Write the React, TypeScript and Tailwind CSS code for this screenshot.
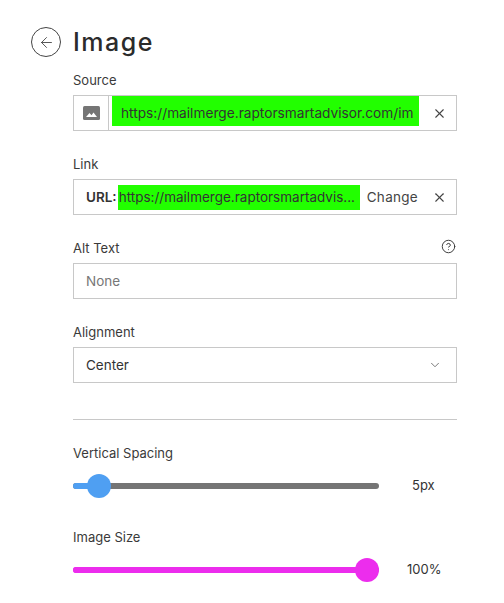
import React from 'react';
import { ArrowLeft, X, ChevronDown, CircleHelp } from 'lucide-react';

const font = "font-['Inter',sans-serif]";

const Field: React.FC<{ label: string; aside?: React.ReactNode; children: React.ReactNode }> = ({ label, aside, children }) => (
  <div className="mb-[24px]">
    <div className="flex h-[24px] items-start justify-between">
      <span className="text-[13px] leading-[18px] text-[#3a3a3a]">{label}</span>
      {aside}
    </div>
    <div className="flex h-[36px] items-center border border-[#c8c8c8] bg-white text-[13.5px] text-[#333]">{children}</div>
  </div>
);

const Clear = () => (
  <button className="ml-auto flex h-full w-[34px] items-center justify-center text-[#444]">
    <X size={15} strokeWidth={1.75} />
  </button>
);

const Slider: React.FC<{ label: string; value: string; percent: number; color: string; track: string; pad: string }> = ({ label, value, percent, color, track, pad }) => (
  <div className="mb-[24px]">
    <div className="h-[24px] text-[13px] leading-[18px] text-[#3a3a3a]">{label}</div>
    <div className="flex h-[36px] items-center">
      <div className={`relative h-[6px] w-[306px] rounded-full ${track}`}>
        <div className={`h-full rounded-full ${color}`} style={{ width: `${percent}%` }} />
        <div className={`absolute top-[-9px] h-[24px] w-[24px] rounded-full ${color}`} style={{ left: `calc(${percent}% - 12px)` }} />
      </div>
      <span className={`text-[13px] text-[#333] ${pad}`}>{value}</span>
    </div>
  </div>
);

export default function App() {
  return (
    <div className={`h-[603px] w-[504px] overflow-hidden bg-white ${font}`}>
      <header className="flex items-center gap-[12px] pl-[31px] pt-[27px]">
        <button className="flex h-[30px] w-[30px] items-center justify-center rounded-full border border-[#444] text-[#444]">
          <ArrowLeft size={17} strokeWidth={1.25} />
        </button>
        <h1 className="text-[25px] font-medium leading-[30px] tracking-[1.5px] text-[#2b2b2b]">Image</h1>
      </header>

      <main className="w-[457px] pl-[73px] pt-[14px]">
        <Field label="Source">
          <div className="flex h-full w-[35px] shrink-0 items-center justify-center border-r border-[#c8c8c8]">
            <svg width="17" height="14" viewBox="0 0 17 14">
              <rect width="17" height="14" rx="1.5" fill="#757575" />
              <path d="M3 11 L6.5 7 L8.5 9.3 L10.5 6.5 L14 11 Z" fill="#fff" />
            </svg>
          </div>
          <div className="ml-[3px] mb-[4px] h-[30px] w-[307px] shrink-0 self-start bg-[#22ff00] pl-[9px] pt-[8px] text-[13.7px] leading-[18px]">
            <span className="whitespace-nowrap">https://mailmerge.raptorsmartadvisor.com/im</span>
          </div>
          <Clear />
        </Field>

        <Field label="Link">
          <span className="ml-[12px] font-semibold text-[#333]">URL:</span>
          <div className="ml-px flex h-[25px] w-[242px] shrink-0 items-center bg-[#22ff00] pl-px">
            <span className="whitespace-nowrap">https://mailmerge.raptorsmartadvis...</span>
          </div>
          <span className="ml-[7px] tracking-[0.3px] text-[#444]">Change</span>
          <Clear />
        </Field>

        <Field label="Alt Text" aside={<CircleHelp size={15} strokeWidth={1.5} className="mr-[1px] text-[#333]" />}>
          <span className="pl-[12px] text-[#777]">None</span>
        </Field>

        <Field label="Alignment">
          <span className="pl-[12px]">Center</span>
          <div className="ml-auto flex h-full w-[43px] items-center justify-center text-[#666]">
            <ChevronDown size={14} strokeWidth={1.5} />
          </div>
        </Field>

        <hr className="mb-[24px] mt-[36px] border-[#c8c8c8]" />

        <Slider label="Vertical Spacing" value="5px" percent={8.5} color="bg-[#4f9ff2]" track="bg-[#757575]" pad="ml-[33px]" />
        <Slider label="Image Size" value="100%" percent={96.2} color="bg-[#ec2ded]" track="bg-[#ec2ded]" pad="ml-[28px]" />
      </main>
    </div>
  );
}
